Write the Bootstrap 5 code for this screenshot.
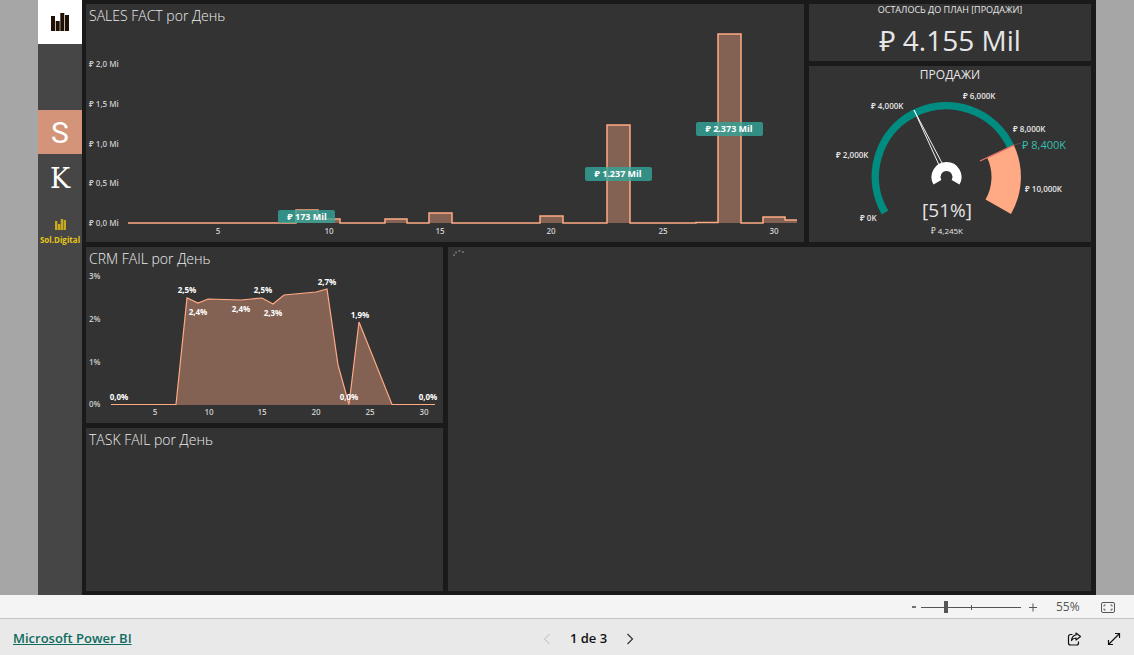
<!DOCTYPE html>
<html lang="pt-BR">
<head>
<meta charset="utf-8">
<meta name="viewport" content="width=device-width, initial-scale=1">
<title>Microsoft Power BI</title>
<link href="https://cdn.jsdelivr.net/npm/bootstrap@5.3.0/dist/css/bootstrap.min.css" rel="stylesheet">
<style>
  body { font-family: "Open Sans", "Noto Sans", sans-serif; background: #e9e9e9; }
  .stage { background: #a6a6a6; padding: 0 38px; }
  .rail { width: 44px; background: #464646; }
  .rail a { height: 44px; color: #fff; line-height: 1; }
  .rail .home { background: #fff; margin-bottom: 66px; }
  .rail .sales { background: #d39479; font: 30px/1 Roboto, sans-serif; padding-top: 2px; }
  .rail .crm { font: 27px/1 "DejaVu Serif", serif; padding-top: 4px; }
  .rail .brand { height: 46px; color: #e6c619; font-size: 8px; font-weight: 700; gap: 6px; }
  .board { background: #1a1a1a; padding: 4px 5px 4px 4px; gap: 5px; min-width: 0; }
  .row-top { flex: 238 1 0; gap: 5px; min-height: 0; }
  .row-bottom { flex: 344 1 0; gap: 5px; min-height: 0; }
  .stack { gap: 5px; min-width: 0; min-height: 0; }
  .panel { background: #333; color: #e6e6e6; min-width: 0; min-height: 0; overflow: hidden; }
  .panel svg { flex: 1 1 0; min-height: 0; width: 100%; display: block; }
  .w-sales { flex: 718 1 0; }
  .w-side { flex: 282 1 0; }
  .w-left { flex: 357 1 0; }
  .w-main { flex: 643 1 0; }
  .h-total { flex: 57 1 0; }
  .h-gauge { flex: 176 1 0; }
  .h-crm { flex: 176 1 0; }
  .h-task { flex: 163 1 0; }
  .panel-title { font-size: 14px; font-weight: 300; line-height: 24px; padding-left: 3px; margin: 0; color: #eee; }
  .total-title { font-size: 9px; line-height: 12px; margin: 0; font-weight: 400; }
  .total-value { font-size: 28px; line-height: 32px; margin-top: 8px; color: #e6e6e6; }
  .gauge-title { font-size: 12px; line-height: 18px; margin: 0; font-weight: 400; }
  .axis { font-size: 8px; font-weight: 600; fill: #ccc; }
  .tag { font-size: 9px; font-weight: 700; fill: #fff; text-anchor: middle; }
  .point { font-size: 8px; font-weight: 700; fill: #fff; text-anchor: middle; }
  .tick { font-size: 8px; font-weight: 600; fill: #e6e6e6; }
  .mid { text-anchor: middle; }
  .line { fill: none; stroke: #ffaa85; stroke-width: 1.5; }
  .line.thin { stroke-width: 1.2; }
  .area { fill: #ffaa85; fill-opacity: .4; }
  .zoombar { height: 24px; background: #f4f4f4; border-bottom: 1px solid #c4c4c4; padding: 1px 18px 0 0; color: #555; }
  .plain { border: 0; background: none; padding: 0; line-height: 1; color: inherit; display: flex; }
  .zoom-track { width: 100px; height: 12px; background: linear-gradient(#555, #555) 50% 50% / 1px 5px no-repeat, linear-gradient(#555, #555) 0 50% / 100% 1px no-repeat; }
  .zoom-track input { appearance: none; width: 100%; height: 12px; margin: 0; background: transparent; display: block; }
  .zoom-track input::-webkit-slider-thumb { appearance: none; width: 4px; height: 12px; background: #555; border: 0; border-radius: 0; }
  .zoom-track input::-moz-range-thumb { width: 4px; height: 12px; background: #555; border: 0; border-radius: 0; }
  .zoom-value { font-size: 12px; font-weight: 400; width: 24px; margin: 0 21px 0 19px; color: #555; }
  .footer { height: 36px; padding: 3px 13px 0; color: #111; }
  .footer a { color: #0e6b5e; font-size: 13px; font-weight: 600; }
  .pager { font-size: 13px; font-weight: 600; gap: 19px; margin-left: 43px; }
</style>
</head>
<body class="d-flex flex-column vh-100 overflow-hidden">
<main class="stage d-flex flex-grow-1">
  <nav class="rail d-flex flex-column flex-shrink-0" aria-label="Páginas">
    <a href="#" class="home d-flex align-items-center justify-content-center" aria-label="Início">
      <svg width="18" height="20" fill="#201004"><path d="M0 4h4v15H0zM4.700 9h4v10h-4zM9.300 1h4v18h-4zM14 3h4v16h-4z"/></svg>
    </a>
    <a href="#" class="sales d-flex align-items-center justify-content-center text-decoration-none">S</a>
    <a href="#" class="crm d-flex align-items-center justify-content-center text-decoration-none">K</a>
    <a href="#" class="brand d-flex flex-column align-items-center justify-content-end text-decoration-none">
      <svg width="11" height="11" fill="#c9a91c"><path d="M0 2h2.400v9H0zM2.900 5h2.400v6H2.900zM5.700 0h2.400v11H5.700zM8.600 1H11v10H8.600z"/></svg>
      <span>Sol.Digital</span>
    </a>
  </nav>

  <div class="board d-flex flex-column flex-grow-1">
    <div class="row-top d-flex">
      <section class="panel w-sales d-flex flex-column">
        <h2 class="panel-title">SALES FACT por День</h2>
        <svg viewBox="0 0 718 214" role="img" aria-label="SALES FACT por День">
          <g class="axis">
            <text x="3" y="39">₽ 2,0 Mi</text><text x="3" y="79">₽ 1,5 Mi</text><text x="3" y="119">₽ 1,0 Mi</text><text x="3" y="158">₽ 0,5 Mi</text><text x="3" y="198">₽ 0,0 Mi</text>
          </g>
          <g class="axis mid">
            <text x="132" y="206">5</text><text x="243" y="206">10</text><text x="354" y="206">15</text><text x="465" y="206">20</text><text x="577" y="206">25</text><text x="688" y="206">30</text>
          </g>
          <path class="area" d="M210 195V182H232V191H254V195zM299 195V191H321V195zM343 195V185H366V195zM454 195V188H477V195zM521 195V97H544V195zM632 195V6H655V195zM677 195V189H699V192H711V195z"/>
          <path class="line" d="M42 195H210V182H232V191H254V195H299V191H321V195H343V185H366V195H454V188H477V195H521V97H544V195H610V194.500H632V6H655V195H677V189H699V192H711"/>
          <g fill="#33a69a" fill-opacity=".8">
            <rect x="192" y="182" width="57" height="13" rx="2"/><rect x="499" y="139" width="67" height="14" rx="2"/><rect x="610" y="94" width="67" height="14" rx="2"/>
          </g>
          <g class="tag"><text x="221" y="192">₽ 173 Mil</text><text x="532" y="149">₽ 1.237 Mil</text><text x="643" y="104">₽ 2.373 Mil</text></g>
        </svg>
      </section>
      <div class="stack w-side d-flex flex-column">
        <section class="panel h-total text-center">
          <h2 class="total-title">ОСТАЛОСЬ ДО ПЛАН [ПРОДАЖИ]</h2>
          <div class="total-value">₽ 4.155 Mil</div>
        </section>
        <section class="panel h-gauge d-flex flex-column text-center">
          <h2 class="gauge-title">ПРОДАЖИ</h2>
          <svg viewBox="0 0 282 158" role="img" aria-label="ПРОДАЖИ">
            <g transform="translate(-1 0)">
            <path d="M77 128.500A71 71 0 1 1 202.800 63" fill="none" stroke="#008c80" stroke-width="7.500"/>
            <path d="M206 61.500A74.500 74.500 0 0 1 203 130L177.500 115.500A45 45 0 0 0 179.300 74z" fill="#ffaa85"/>
            <path d="M206 61L172 77" stroke="#f4756b" stroke-width="1.200"/>
            <path d="M206 61L213 59" stroke="#6b4a45" stroke-width="1"/>
            <path d="M131 81L106 26L134 79" fill="none" stroke="#f4f4f4" stroke-width="1"/>
            <path d="M129.400 98.300A10.500 10.500 0 1 1 147.600 98.300" fill="none" stroke="#fff" stroke-width="9"/>
            <g class="tick">
              <text x="52" y="137">₽ 0K</text><text x="28" y="74">₽ 2,000K</text><text x="63" y="25">₽ 4,000K</text><text x="155" y="15">₽ 6,000K</text><text x="205" y="48">₽ 8,000K</text><text x="217" y="108">₽ 10,000K</text>
              <text class="mid" x="139" y="150" font-weight="400">₽ 4,245K</text>
            </g>
            <text x="214" y="65" font-size="11" fill="#33bfae">₽ 8,400K</text>
            <text class="mid" x="139" y="133" font-size="19" fill="#e6e6e6">[51%]</text>
            </g>
          </svg>
        </section>
      </div>
    </div>
    <div class="row-bottom d-flex">
      <div class="stack w-left d-flex flex-column">
        <section class="panel h-crm d-flex flex-column">
          <h2 class="panel-title">CRM FAIL por День</h2>
          <svg viewBox="0 0 357 152" role="img" aria-label="CRM FAIL por День">
            <g transform="translate(0 -2)">
            <g class="axis">
              <text x="3" y="10">3%</text><text x="3" y="53">2%</text><text x="3" y="96">1%</text><text x="3" y="138">0%</text>
            </g>
            <g class="axis mid">
              <text x="69" y="146">5</text><text x="123" y="146">10</text><text x="176" y="146">15</text><text x="230" y="146">20</text><text x="284" y="146">25</text><text x="338" y="146">30</text>
            </g>
            <path class="area" d="M90 136L101 29L112 34L122 30L155 31L165 30L176 29L187 35L198 26L230 23L241 20L252 96L263 136L273 53L306 136z"/>
            <path class="line thin" d="M25 135.500H90L101 29L112 34L122 30L155 31L165 30L176 29L187 35L198 26L230 23L241 20L252 96L263 135.500L273 53L306 135.500H349"/>
            <g class="point">
              <text x="33" y="131">0,0%</text><text x="101" y="24">2,5%</text><text x="112" y="46">2,4%</text><text x="155" y="43">2,4%</text><text x="177" y="24">2,5%</text><text x="187" y="47">2,3%</text><text x="241" y="16">2,7%</text><text x="263" y="131">0,0%</text><text x="274" y="49">1,9%</text><text x="342" y="131">0,0%</text>
            </g>
            </g>
          </svg>
        </section>
        <section class="panel h-task">
          <h2 class="panel-title">TASK FAIL por День</h2>
        </section>
      </div>
      <section class="panel w-main" aria-busy="true">
        <svg viewBox="0 0 643 344" aria-hidden="true" fill="#777"><circle cx="6" cy="8" r="1"/><circle cx="8" cy="5.500" r="1"/><circle cx="11.500" cy="4" r="1"/><circle cx="15" cy="5" r="1"/></svg>
      </section>
    </div>
  </div>
</main>

<div class="zoombar d-flex align-items-center justify-content-end flex-shrink-0">
  <button class="plain" type="button" aria-label="Reduzir"><svg width="6" height="8"><path d="M1 4H5" stroke="#444" stroke-width="1.500"/></svg></button>
  <div class="zoom-track mx-1"><input type="range" min="0" max="100" value="24" aria-label="Zoom"></div>
  <button class="plain ms-1" type="button" aria-label="Ampliar"><svg width="8" height="9"><path d="M0 4.500H8M4 .5V8.500" stroke="#555"/></svg></button>
  <span class="zoom-value">55%</span>
  <button class="plain" type="button" aria-label="Ajustar à página"><svg width="15" height="11" fill="none" stroke="#555"><rect x=".5" y=".5" width="13" height="10" rx="1.500"/><path d="M3 4.500V3H4.500M9.500 3H11V4.500M11 6.500V8H9.500M4.500 8H3V6.500"/></svg></button>
</div>

<footer class="footer row g-0 align-items-center flex-shrink-0">
  <div class="col d-flex"><a href="#">Microsoft Power BI</a></div>
  <div class="pager col-auto d-flex align-items-center">
    <button class="plain" type="button" disabled aria-label="Anterior"><svg width="8" height="12" fill="none" stroke="#bbb"><path d="M6.500 1L1.500 6L6.500 11"/></svg></button>
    <span>1 de 3</span>
    <button class="plain" type="button" aria-label="Próxima"><svg width="8" height="12" fill="none" stroke="#333" stroke-width="1.200"><path d="M1.500 1L6.500 6L1.500 11"/></svg></button>
  </div>
  <div class="col d-flex justify-content-end align-items-center">
    <button class="plain me-4" type="button" aria-label="Compartilhar"><svg width="16" height="14" fill="none" stroke="#111" stroke-width="1.200" stroke-linejoin="round"><path d="M5.500 2.500H3.500a2 2 0 0 0-2 2V11a2 2 0 0 0 2 2H9.500a2 2 0 0 0 2-2V9.500"/><path d="M9 1L13.500 4.500L9 8V6Q6 6 4.500 8.500Q5 3.500 9 3z"/></svg></button>
    <button class="plain" type="button" aria-label="Tela cheia"><svg width="14" height="14" fill="none" stroke="#111" stroke-width="1.200"><path d="M1.500 12.500L12.500 1.500M8 1.500H12.500V6M1.500 8V12.500H6"/></svg></button>
  </div>
</footer>
<script src="https://cdn.jsdelivr.net/npm/bootstrap@5.3.0/dist/js/bootstrap.bundle.min.js"></script>
</body>
</html>
